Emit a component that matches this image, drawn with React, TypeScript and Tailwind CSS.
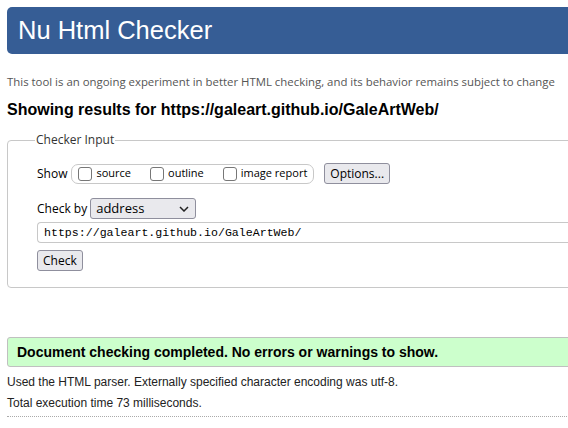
export default function App() {
  return (
    <div className="w-[700px] bg-white px-[7px] pt-[7px] text-black" style={{ fontFamily: '"Liberation Sans", Arial, sans-serif' }}>
      {/* header */}
      <div className="h-[47px] rounded-[5px] bg-[#365d95] pl-[11px] flex items-center">
        <h1 className="text-[25.5px] text-white leading-none">Nu Html Checker</h1>
      </div>

      <p className="mt-[21px] text-[11.4px] text-[#555] leading-[14px]" style={{ fontFamily: '"Open Sans", "Noto Sans", sans-serif' }}>
        This tool is an ongoing experiment in better HTML checking, and its behavior remains subject to change
      </p>
      <h2 className="mt-[12px] text-[16px] font-bold leading-[18px]">Showing results for https://galeart.github.io/GaleArtWeb/</h2>

      {/* checker input */}
      <fieldset className="mt-[14px] h-[155px] rounded-[4px] border border-[#c8c8c8] pl-[29px] pr-2" style={{ fontFamily: '"Open Sans", "Noto Sans", sans-serif' }}>
        <legend className="ml-[-2px] px-[1px] text-[12px] text-[#333] leading-[14px]">Checker Input</legend>

        <div className="mt-[16px] flex items-center">
          <span className="text-[12px] mr-[4px]">Show</span>
          <div className="h-[20px] flex items-center rounded-[7px] border border-[#c8c8c8] pl-[6px] pr-[6px] text-[11px]">
            <span className="w-[14px] h-[14px] border border-[#777] rounded-[3px] bg-white mr-[4px]" />
            <span className="mr-[19px]">source</span>
            <span className="w-[14px] h-[14px] border border-[#777] rounded-[3px] bg-white mr-[4px]" />
            <span className="mr-[19px]">outline</span>
            <span className="w-[14px] h-[14px] border border-[#777] rounded-[3px] bg-white mr-[4px]" />
            <span>image report</span>
          </div>
          <button className="ml-[10px] h-[21px] px-[5px] rounded-[3px] border border-[#8f8f9d] bg-[#e9e9ed] text-[12px] leading-none">Options...</button>
        </div>

        <div className="mt-[14px] flex items-center">
          <span className="text-[12px] mr-[3px]">Check by</span>
          <div className="w-[106px] h-[21px] flex items-center justify-between rounded-[3px] border border-[#8f8f9d] bg-[#e9e9ed] pl-[5px] pr-[6px]">
            <span className="text-[13px] leading-none">address</span>
            <svg width="10" height="6" viewBox="0 0 10 6" fill="none" stroke="#222" strokeWidth="1.5"><path d="M1 1l4 4 4-4" /></svg>
          </div>
        </div>

        <div className="mt-[3px] h-[21px] rounded-[4px] border border-[#c8c8c8] border-r-0 rounded-r-none flex items-center pl-[6px] -mr-2 text-[11.6px]" style={{ fontFamily: '"Liberation Mono", "DejaVu Sans Mono", monospace' }}>
          https://galeart.github.io/GaleArtWeb/
        </div>

        <button className="mt-[7px] h-[21px] px-[5px] rounded-[3px] border border-[#8f8f9d] bg-[#e9e9ed] text-[12px] leading-none">Check</button>
      </fieldset>

      {/* result */}
      <div className="mt-[49px] h-[30px] rounded-[3px] border border-[#c0c0c0] bg-[#ccffcc] pl-[9px] flex items-center">
        <span className="text-[14px] font-bold">Document checking completed. No errors or warnings to show.</span>
      </div>

      <p className="mt-[8px] text-[12px] leading-[14px] text-[#222]">Used the HTML parser. Externally specified character encoding was utf-8.</p>
      <p className="mt-[7px] text-[12px] leading-[14px] text-[#222]">Total execution time 73 milliseconds.</p>
      <div className="mt-[6px] border-b border-dotted border-[#aaa]" />
      <div className="h-[20px]" />
    </div>
  );
}
